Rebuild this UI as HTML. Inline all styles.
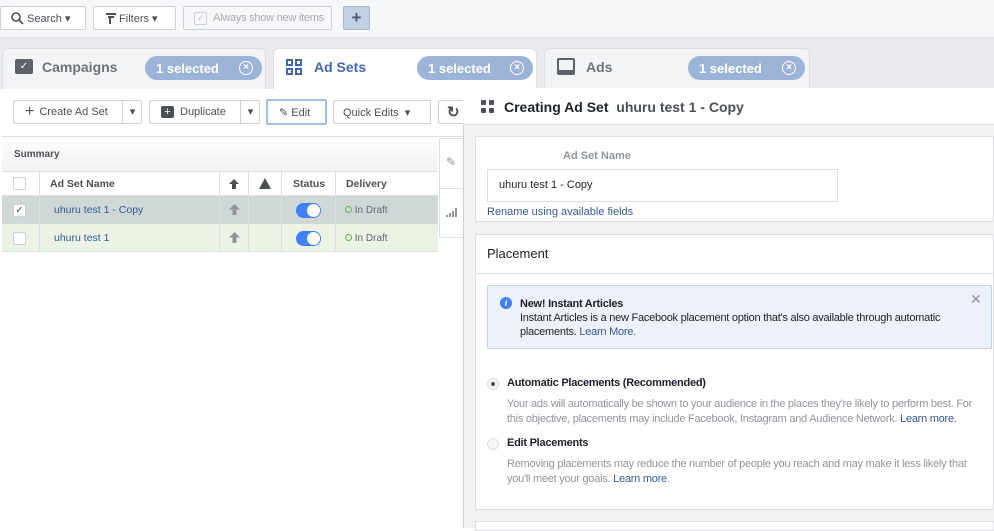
<!DOCTYPE html><html><head><style>
*{box-sizing:border-box;margin:0;padding:0}
body{width:994px;height:528px;overflow:hidden;background:#fff;font-family:"Liberation Sans",sans-serif;font-size:12px;color:#4b4f56;position:relative}
.a{position:absolute;white-space:nowrap}
.btn{position:absolute;border:1px solid #ccd0d5;background:#fff;border-radius:2px;height:24px;font-size:11px;font-weight:bold;color:#4b4f56;display:flex;align-items:center;white-space:nowrap}
.pill{position:absolute;background:#9cb4d8;color:#fff;border-radius:12px;height:24px;font-size:13px;font-weight:bold;display:flex;align-items:center;padding-left:11px}
.pill i{position:absolute;right:9px;top:5px;width:14px;height:14px;border:1.5px solid #fff;border-radius:50%;font-style:normal;font-size:10px;line-height:11px;text-align:center}
.tab{position:absolute;top:48px;height:45px;border:1px solid #dddfe2;border-bottom:none;border-radius:6px 6px 0 0}
.t{font-size:14px;font-weight:bold}
.link{color:#365899}
.sm{letter-spacing:-0.25px}
</style></head><body>
<div class="a" style="left:0;top:0;width:994px;height:38px;background:#f6f7f9;border-bottom:1px solid #dddfe2"></div>
<div class="a" style="left:0;top:38px;width:994px;height:52px;background:#e9ebee"></div>
<div class="btn" style="left:0;top:6px;width:86px;padding-left:10px;font-weight:normal"><svg width="13" height="13" viewBox="0 0 13 13"><circle cx="5" cy="5" r="4" fill="none" stroke="#4b4f56" stroke-width="1.6"/><path d="M8 8l4 4" stroke="#4b4f56" stroke-width="1.8"/></svg>&nbsp;Search ▾</div>
<div class="btn" style="left:93px;top:6px;width:83px;padding-left:12px;font-weight:normal"><svg width="10" height="11"><path d="M0 1h10M2 4h6M4 4v7" stroke="#4b4f56" stroke-width="2"/></svg>&nbsp;Filters ▾</div>
<div class="btn sm" style="left:183px;top:6px;width:149px;padding-left:10px;color:#a8abaf;font-weight:normal;background:#f6f7f9"><span style="display:inline-block;width:13px;height:13px;border:1px solid #ccd0d5;border-radius:2px;margin-right:6px;font-size:9px;text-align:center;color:#bbb">✓</span>Always show new items</div>
<div class="btn" style="left:343px;top:6px;width:27px;background:#c2d0e6;border-color:#a5b6d2;justify-content:center;font-size:17px;color:#4b5a74">+</div>
<div class="tab" style="left:2px;width:264px;background:#f3f4f6"></div>
<div class="a" style="left:15px;top:59px;width:18px;height:15px;background:#5e6269;border-radius:2px;color:#fff;font-size:10px;text-align:center;line-height:15px">✓</div>
<div class="a t" style="left:42px;top:59px;color:#6f7379">Campaigns</div>
<div class="pill" style="left:145px;top:56px;width:117px">1 selected<i>×</i></div>
<div class="tab" style="left:273px;width:264px;background:#fff;height:48px"></div>
<svg class="a" style="left:286px;top:59px" width="16" height="16"><g fill="none" stroke="#4267b2" stroke-width="2"><rect x="1" y="1" width="5" height="5"/><rect x="10" y="1" width="5" height="5"/><rect x="1" y="10" width="5" height="5"/><rect x="10" y="10" width="5" height="5"/></g></svg>
<div class="a t" style="left:314px;top:59px;color:#4267b2">Ad Sets</div>
<div class="pill" style="left:417px;top:56px;width:116px">1 selected<i>×</i></div>
<div class="tab" style="left:544px;width:266px;background:#f3f4f6"></div>
<div class="a" style="left:557px;top:58px;width:18px;height:17px;border:2.5px solid #5e6269;border-bottom-width:5px;border-radius:2px"></div>
<div class="a t" style="left:586px;top:59px;color:#6f7379">Ads</div>
<div class="pill" style="left:688px;top:56px;width:117px">1 selected<i>×</i></div>
<div class="a" style="left:2px;top:89px;width:462px;height:48px;background:#fff;border-bottom:1px solid #dddfe2"></div>
<div class="btn" style="left:13px;top:100px;width:129px;padding-left:11px;font-weight:normal"><span style="font-size:16px;margin-right:5px">+</span>Create Ad Set<span class="a" style="left:108px;top:0;height:22px;border-left:1px solid #ccd0d5;width:20px;text-align:center;line-height:22px">▾</span></div>
<div class="btn" style="left:149px;top:100px;width:111px;padding-left:11px;font-weight:normal"><span style="display:inline-block;width:13px;height:12px;background:#4b4f56;border-radius:2px;color:#fff;font-size:11px;line-height:12px;text-align:center;margin-right:6px">+</span>Duplicate<span class="a" style="left:90px;top:0;height:22px;border-left:1px solid #ccd0d5;width:20px;text-align:center;line-height:22px">▾</span></div>
<div class="btn" style="left:266px;top:99px;width:61px;height:26px;border:2px solid #a4bde8;padding-left:11px;font-weight:normal">✎&nbsp;Edit</div>
<div class="btn" style="left:333px;top:100px;width:98px;padding-left:9px;font-weight:normal">Quick Edits&nbsp;&nbsp;▾</div>
<div class="btn" style="left:438px;top:100px;width:30px;padding-left:8px;font-size:15px">↻</div>
<div class="a" style="left:2px;top:137px;width:436px;height:35px;background:linear-gradient(#fff,#f1f1f1);border-bottom:1px solid #dddfe2"></div>
<div class="a" style="left:14px;top:149px;font-size:10px;font-weight:bold">Summary</div>
<div class="a" style="left:2px;top:172px;width:436px;height:24px;border-bottom:1px solid #dddfe2"></div>
<div class="a" style="left:2px;top:196px;width:436px;height:28px;background:#cfd8d6"></div>
<div class="a" style="left:2px;top:224px;width:436px;height:28px;background:#ebf3e5;border-bottom:1px solid #dddfe2"></div>
<div class="a" style="left:39px;top:172px;height:80px;border-left:1px solid #dddfe2"></div>
<div class="a" style="left:219px;top:172px;height:80px;border-left:1px solid #dddfe2"></div>
<div class="a" style="left:248px;top:172px;height:80px;border-left:1px solid #dddfe2"></div>
<div class="a" style="left:281px;top:172px;height:80px;border-left:1px solid #dddfe2"></div>
<div class="a" style="left:335px;top:172px;height:80px;border-left:1px solid #dddfe2"></div>
<div class="a" style="left:13px;top:177px;width:13px;height:13px;border:1px solid #ccd0d5;border-radius:2px;background:#fff"></div>
<div class="a" style="left:13px;top:204px;width:13px;height:13px;border:1px solid #ccd0d5;border-radius:2px;background:#fff;font-size:10px;text-align:center;line-height:12px">✓</div>
<div class="a" style="left:13px;top:232px;width:13px;height:13px;border:1px solid #ccd0d5;border-radius:2px;background:#fff"></div>
<div class="a" style="left:50px;top:178px;font-size:10.5px;font-weight:bold">Ad Set Name</div>
<svg class="a" style="left:229px;top:179px" width="10" height="10"><path d="M5 0L10 5H7V10H3V5H0Z" fill="#4b4f56"/></svg>
<svg class="a" style="left:259px;top:178px" width="12" height="11"><path d="M6 0L12 11H0Z" fill="#4b4f56"/></svg>
<div class="a" style="left:293px;top:178px;font-size:10.5px;font-weight:bold">Status</div>
<div class="a" style="left:346px;top:178px;font-size:10.5px;font-weight:bold">Delivery</div>
<div class="a link" style="left:54px;top:204px;font-size:10.5px">uhuru test 1 - Copy</div>
<div class="a link" style="left:54px;top:232px;font-size:10.5px">uhuru test 1</div>
<svg class="a" style="left:229px;top:204px" width="11" height="11"><path d="M5.5 0L11 5.5H7.5V11H3.5V5.5H0Z" fill="#90949c"/></svg>
<svg class="a" style="left:229px;top:232px" width="11" height="11"><path d="M5.5 0L11 5.5H7.5V11H3.5V5.5H0Z" fill="#90949c"/></svg>
<div class="a" style="left:296px;top:203px;width:25px;height:15px;border-radius:8px;background:#4080ff"><div class="a" style="right:1px;top:1px;width:13px;height:13px;border-radius:50%;background:#fff"></div></div>
<div class="a" style="left:296px;top:231px;width:25px;height:15px;border-radius:8px;background:#4080ff"><div class="a" style="right:1px;top:1px;width:13px;height:13px;border-radius:50%;background:#fff"></div></div>
<div class="a" style="left:345px;top:205px;font-size:10px;color:#606770"><span style="display:inline-block;width:7px;height:7px;border:1.5px solid #6bb548;border-radius:50%"></span> In Draft</div>
<div class="a" style="left:345px;top:233px;font-size:10px;color:#606770"><span style="display:inline-block;width:7px;height:7px;border:1.5px solid #6bb548;border-radius:50%"></span> In Draft</div>
<div class="a" style="left:439px;top:138px;width:26px;height:100px;background:#fff;border:1px solid #dddfe2;border-right:none"></div>
<div class="a" style="left:439px;top:188px;width:26px;border-top:1px solid #dddfe2"></div>
<div class="a" style="left:446px;top:155px;color:#90949c">✎</div>
<svg class="a" style="left:446px;top:206px" width="13" height="12"><path d="M1 11v-2M4 11v-4M7 11v-6M10 11v-9" stroke="#90949c" stroke-width="2"/></svg>
<div class="a" style="left:463px;top:88px;width:531px;height:440px;background:#f2f2f2;border-left:1px solid #ccd0d5"></div>
<div class="a" style="left:463px;top:88px;width:531px;height:37px;background:#fff;border-bottom:1px solid #dddfe2"></div>
<svg class="a" style="left:481px;top:100px" width="13" height="13"><g fill="#4b4f56"><rect x="0" y="0" width="5" height="5" rx="1"/><rect x="8" y="0" width="5" height="5" rx="1"/><rect x="0" y="8" width="5" height="5" rx="1"/><rect x="8" y="8" width="5" height="5" rx="1"/></g></svg>
<div class="a t" style="left:504px;top:99px;color:#1d2129">Creating Ad Set&nbsp;&nbsp;<span style="color:#4b4f56">uhuru test 1 - Copy</span></div>
<div class="a" style="left:475px;top:136px;width:519px;height:86px;background:#fff;border:1px solid #dddfe2"></div>
<div class="a" style="left:563px;top:150px;font-size:11px;font-weight:bold;color:#90949c">Ad Set Name</div>
<div class="a" style="left:487px;top:169px;width:351px;height:33px;border:1px solid #dddfe2;padding:9px 11px;font-size:11px;color:#1d2129">uhuru test 1 - Copy</div>
<div class="a link" style="left:487px;top:206px;font-size:11px">Rename using available fields</div>
<div class="a" style="left:475px;top:234px;width:519px;height:276px;background:#fff;border:1px solid #dddfe2"></div>
<div class="a" style="left:475px;top:273px;width:519px;border-top:1px solid #dddfe2"></div>
<div class="a" style="left:487px;top:246px;font-size:13px;color:#1d2129">Placement</div>
<div class="a" style="left:487px;top:285px;width:505px;height:64px;background:#edf1f8;border:1px solid #c4d2e7;border-radius:2px"></div>
<div class="a" style="left:500px;top:297px;width:12px;height:12px;border-radius:50%;background:#4080ff;color:#fff;font-size:9px;font-weight:bold;text-align:center;line-height:12px;font-style:italic">i</div>
<div class="a sm" style="left:520px;top:297px;font-size:11px;color:#1d2129;line-height:14px"><b>New! Instant Articles</b><br>Instant Articles is a new Facebook placement option that's also available through automatic<br>placements. <span class="link">Learn More.</span></div>
<div class="a" style="left:970px;top:291px;font-size:14px;color:#90949c">✕</div>
<div class="a" style="left:487px;top:378px;width:12px;height:12px;border-radius:50%;border:1px solid #dddfe2;background:#f5f6f7"><div class="a" style="left:3px;top:3px;width:4px;height:4px;border-radius:50%;background:#4b4f56"></div></div>
<div class="a sm" style="left:507px;top:377px;font-size:11px;font-weight:bold;color:#1d2129">Automatic Placements (Recommended)</div>
<div class="a sm" style="left:507px;top:397px;font-size:11px;color:#90949c;line-height:15px">Your ads will automatically be shown to your audience in the places they're likely to perform best. For<br>this objective, placements may include Facebook, Instagram and Audience Network. <span class="link">Learn more.</span></div>
<div class="a" style="left:487px;top:438px;width:12px;height:12px;border-radius:50%;border:1px solid #dddfe2;background:#f5f6f7"></div>
<div class="a sm" style="left:507px;top:437px;font-size:11px;font-weight:bold;color:#1d2129">Edit Placements</div>
<div class="a sm" style="left:507px;top:457px;font-size:11px;color:#90949c;line-height:15px">Removing placements may reduce the number of people you reach and may make it less likely that<br>you'll meet your goals. <span class="link">Learn more</span>.</div>
<div class="a" style="left:475px;top:521px;width:519px;height:10px;background:#fff;border:1px solid #dddfe2"></div>
</body></html>
